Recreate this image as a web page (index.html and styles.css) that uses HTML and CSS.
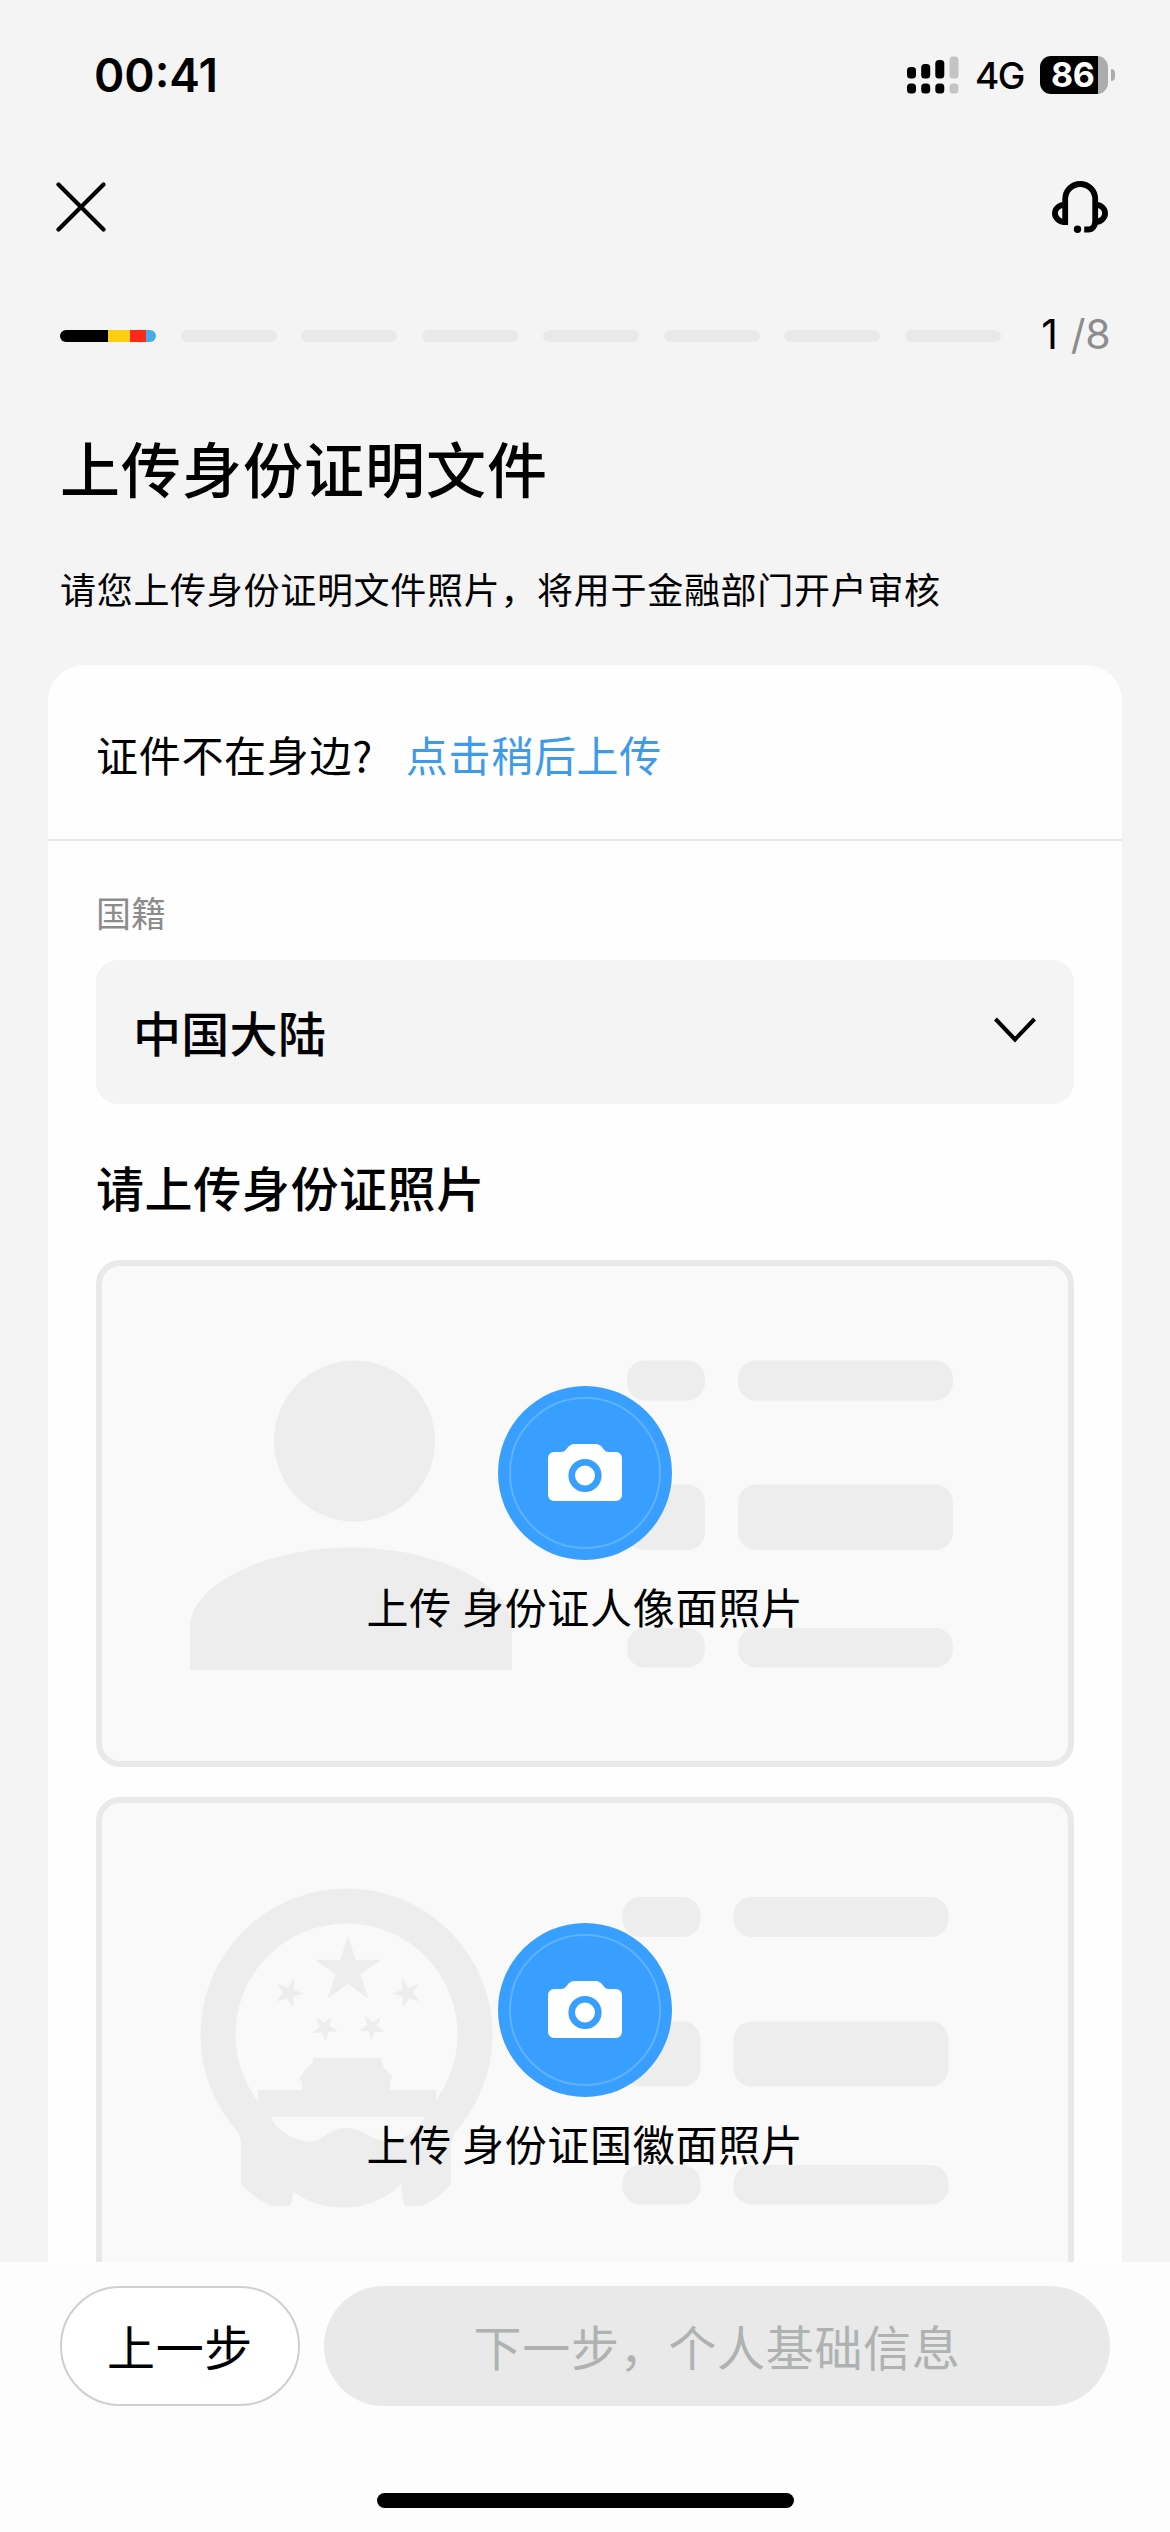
FILE: index.html
```html
<!DOCTYPE html>
<html lang="zh-CN">
<head>
<meta charset="utf-8">
<title>上传身份证明文件</title>
<link rel="stylesheet" href="styles.css">
</head>
<body>
<svg class="defs" width="0" height="0" aria-hidden="true">
  <symbol id="star" viewBox="-10 -10 20 20">
    <path d="M0-10 2.25-3.09 9.51-3.09 3.63 1.18 5.88 8.09 0 3.82-5.88 8.09-3.63 1.18-9.51-3.09-2.25-3.09Z"/>
  </symbol>
  <symbol id="camera" viewBox="0 0 74 58">
    <path fill="#fff" d="M6 8h7c3 0 4-1 6-3.500 2-2.800 4-4.500 8-4.500h20c4 0 6 1.700 8 4.500 2 2.500 3 3.500 6 3.500h7a6 6 0 0 1 6 6v37a6 6 0 0 1-6 6H6a6 6 0 0 1-6-6V14a6 6 0 0 1 6-6Z"/>
    <circle cx="37" cy="31.500" r="13.300" fill="none" stroke="#389ffe" stroke-width="6.600"/>
  </symbol>
</svg>

<div class="screen">
  <header class="status">
    <span class="time">00:41</span>
    <div class="indicators">
      <svg class="signal" width="52" height="38" viewBox="0 0 52 38">
        <rect x="0" y="11" width="9" height="11.500" rx="3.500"/><rect x="14.200" y="8" width="9" height="14.500" rx="3.500"/><rect x="28.300" y="4" width="9" height="18.500" rx="3.500"/>
        <rect x="0" y="27.500" width="9" height="10" rx="3.500"/><rect x="14.200" y="27.500" width="9" height="10" rx="3.500"/><rect x="28.300" y="27.500" width="9" height="10" rx="3.500"/>
        <g fill="#c4c4c4"><rect x="42.500" y="0.500" width="9" height="22" rx="3.500"/><rect x="42.500" y="27.500" width="9" height="10" rx="3.500"/></g>
      </svg>
      <span class="network">4G</span>
      <div class="battery"><span class="level">86</span></div>
      <i class="nub"></i>
    </div>
  </header>

  <nav class="nav">
    <svg width="50" height="50" viewBox="0 0 50 50" fill="none" stroke="#000" stroke-width="4.200" stroke-linecap="round"><path d="M2.500 2.500 47.500 47.500M47.500 2.500 2.500 47.500"/></svg>
    <svg width="56" height="52" viewBox="0 0 56 52" fill="none" stroke="#000" stroke-width="5.800">
      <path d="M13.200 44V18a15 15 0 0 1 30 0V40c0 5.500-3 8.500-7 8.500h-4"/>
      <path d="M13.200 23.600a10.300 8.700 0 0 0 0 17.400M43.200 23.600a9.900 8.700 0 0 1 0 17.400"/>
      <circle cx="25.500" cy="48.200" r="3.700" fill="#000" stroke="none"/>
    </svg>
  </nav>

  <div class="progress">
    <div class="steps">
      <i class="step active"></i><i class="step"></i><i class="step"></i><i class="step"></i><i class="step"></i><i class="step"></i><i class="step"></i><i class="step"></i>
    </div>
    <div class="count"><b>1</b><span>/8</span></div>
  </div>

  <h1>上传身份证明文件</h1>
  <p class="intro">请您上传身份证明文件照片，将用于金融部门开户审核</p>

  <main class="card">
    <div class="later"><span>证件不在身边?</span><a>点击稍后上传</a></div>
    <div class="form">
      <label>国籍</label>
      <div class="select">
        <span>中国大陆</span>
        <svg width="42" height="26" viewBox="0 0 42 26" fill="none" stroke="#000" stroke-width="4"><path d="M1.500 2 21 22.500 40.500 2"/></svg>
      </div>
      <h2>请上传身份证照片</h2>

      <div class="upload">
        <svg class="art" width="966" height="495" viewBox="102 1266 966 495" fill="#ededed">
          <circle cx="354.500" cy="1441" r="80.500"/>
          <path d="M190 1670V1627C190 1585 265 1547.500 351 1547.500S512 1585 512 1627V1670Z"/>
          <rect x="627" y="1360.500" width="78" height="40" rx="18"/><rect x="738" y="1360.500" width="215" height="40" rx="18"/>
          <rect x="627" y="1484.500" width="78" height="65.500" rx="18"/><rect x="738" y="1484.500" width="215" height="65.500" rx="18"/>
          <rect x="627" y="1628" width="78" height="39.500" rx="18"/><rect x="738" y="1628" width="215" height="39.500" rx="18"/>
        </svg>
        <div class="shoot"><svg width="74" height="58"><use href="#camera"/></svg></div>
        <span>上传 身份证人像面照片</span>
      </div>

      <div class="upload">
        <svg class="art" width="966" height="495" viewBox="102 1803 966 495" fill="#ededed">
          <circle cx="346.500" cy="2034.500" r="128.500" fill="none" stroke="#ededed" stroke-width="35"/>
          <path d="M234 2120 258 2104V2090H302V2083L299 2078 306 2069 313 2063V2058H381L384 2068 392 2076 390 2083V2090H436V2104L459 2120 451 2143V2184Q437 2200 422 2206H405Q402 2200 401 2184C372 2214 323 2214 294 2192L290 2206H272Q254 2199 241 2184V2140Z"/>
          <path fill="#f9f9f9" d="M271 2117H425C419 2130 402 2142 384 2141 370 2139 363 2128 346 2128S325 2140 311 2142C292 2140 276 2130 271 2117Z"/>
          <use href="#star" x="313.500" y="1936" width="69" height="69"/>
          <use href="#star" x="274" y="1978" width="30" height="30" transform="rotate(20 289 1993)"/>
          <use href="#star" x="392" y="1978" width="30" height="30" transform="rotate(-20 407 1993)"/>
          <use href="#star" x="311" y="2014" width="27" height="27" transform="rotate(32 324 2028)"/>
          <use href="#star" x="359" y="2014" width="27" height="27" transform="rotate(-32 372 2028)"/>
          <rect x="622.500" y="1897" width="78" height="40" rx="18"/><rect x="733.500" y="1897" width="215" height="40" rx="18"/>
          <rect x="622.500" y="2021.500" width="78" height="65" rx="18"/><rect x="733.500" y="2021.500" width="215" height="65" rx="18"/>
          <rect x="622.500" y="2165" width="78" height="39.500" rx="18"/><rect x="733.500" y="2165" width="215" height="39.500" rx="18"/>
        </svg>
        <div class="shoot"><svg width="74" height="58"><use href="#camera"/></svg></div>
        <span>上传 身份证国徽面照片</span>
      </div>
    </div>
  </main>

  <footer>
    <div class="actions">
      <button class="prev">上一步</button>
      <button class="next">下一步，个人基础信息</button>
    </div>
    <i class="home"></i>
  </footer>
</div>
</body>
</html>
```
FILE: styles.css
```css
* { box-sizing: border-box; margin: 0; padding: 0; }
body { background: #f4f4f4; color: #000; font-family: "Noto Sans CJK SC", sans-serif; }
svg { display: block; flex: none; }
i { display: block; }
.defs { position: absolute; }

.screen { width: 1170px; height: 2532px; display: flex; flex-direction: column; overflow: hidden; }

.status { flex: none; height: 149px; padding: 0 55px 0 94px; display: flex; align-items: center; justify-content: space-between; font-family: Inter, sans-serif; }
.time { font-size: 46px; font-weight: 600; line-height: 60px; letter-spacing: 0; }
.indicators { display: flex; align-items: center; }
.network { margin-left: 16px; width: 50px; font-size: 37px; font-weight: 500; line-height: 40px; letter-spacing: -1.5px; padding-top: 3px; }
.battery { margin-left: 15px; width: 68px; height: 38px; border-radius: 11px; background: linear-gradient(90deg, #000 58px, #acacac 58px); }
.level { display: block; padding-left: 11px; color: #fff; font-size: 34px; font-weight: 700; line-height: 38px; letter-spacing: -0.5px; }
.nub { margin-left: 3px; width: 4px; height: 12px; border-radius: 0 5px 5px 0; background: #acacac; }

.nav { flex: none; height: 116px; padding: 0 62px 0 56px; display: flex; justify-content: space-between; align-items: center; }

.progress { flex: none; height: 142px; padding: 0 60px 0 60px; display: flex; align-items: center; justify-content: space-between; }
.steps { width: 941px; display: flex; justify-content: space-between; }
.step { width: 96px; height: 12px; border-radius: 6px; background: #e9e9e9; }
.step.active { background: linear-gradient(90deg, #000 48px, #fdcf13 48px 70px, #fb2a18 70px 86px, #47abe8 86px); }
.count { display: flex; gap: 13px; font: 400 41px/50px Inter, sans-serif; padding-bottom: 5px; }
.count b { font-weight: 400; }
.count span { color: #8c8c8c; letter-spacing: -0.5px; }

h1 { flex: none; padding-left: 60px; height: 128px; font-size: 60px; font-weight: 500; line-height: 120px; letter-spacing: 1px; }
.intro { flex: none; padding-left: 60px; height: 130px; font-size: 36px; line-height: 106px; letter-spacing: 0.7px; }

.card { flex: none; width: 1074px; height: 1597px; margin-left: 48px; border-radius: 36px 36px 0 0; background: #fefefe; overflow: hidden; }
.later { height: 176px; padding: 3px 0 0 48px; display: flex; align-items: center; gap: 33px; border-bottom: 2px solid #e8e8e8; font-size: 42px; line-height: 60px; letter-spacing: 0.7px; }
.later a { color: #3d9bea; }
.form { padding: 0 48px; }
label { display: block; height: 119px; padding-top: 47px; font-size: 35px; line-height: 48px; color: #8c8c8c; }
.select { height: 144px; padding: 0 38px 2px 37px; border-radius: 22px; background: #f4f4f4; display: flex; align-items: center; justify-content: space-between; font-size: 48px; font-weight: 500; line-height: 70px; letter-spacing: 0.3px; }
.select svg { margin-top: -2px; }
h2 { height: 156px; padding-top: 46px; font-size: 48px; font-weight: 500; line-height: 72px; letter-spacing: 0.6px; }

.upload { position: relative; height: 507px; margin-bottom: 30px; padding-top: 120px; border: 6px solid #e9e9e9; border-radius: 24px; background: #f9f9f9; display: flex; flex-direction: column; align-items: center; font-size: 42px; line-height: 60px; letter-spacing: 0.7px; white-space: pre; }
.art { position: absolute; left: 0; top: 0; }
.shoot { position: relative; flex: none; width: 174px; height: 174px; margin-bottom: 16px; border-radius: 50%; background: #389ffe; display: flex; align-items: center; justify-content: center; }
.shoot::after { content: ""; position: absolute; inset: 11px; border: 2px solid #5fb3fd; border-radius: 50%; }
.upload span { position: relative; }

footer { position: relative; flex: none; height: 270px; background: #fdfdfd; padding: 24px 60px 24px; display: flex; flex-direction: column; justify-content: space-between; align-items: center; }
.actions { width: 100%; display: flex; gap: 24px; }
button { height: 120px; padding-bottom: 3px; border: 0; border-radius: 60px; font-family: inherit; font-size: 48px; line-height: 70px; letter-spacing: 0.7px; }
.prev { width: 240px; border: 2px solid #cfcfcf; background: #fff; color: #000; }
.next { flex: 1; background: #e9e9e9; color: #aeb3b1; }
.home { width: 417px; height: 15px; border-radius: 8px; background: #000; }
```
